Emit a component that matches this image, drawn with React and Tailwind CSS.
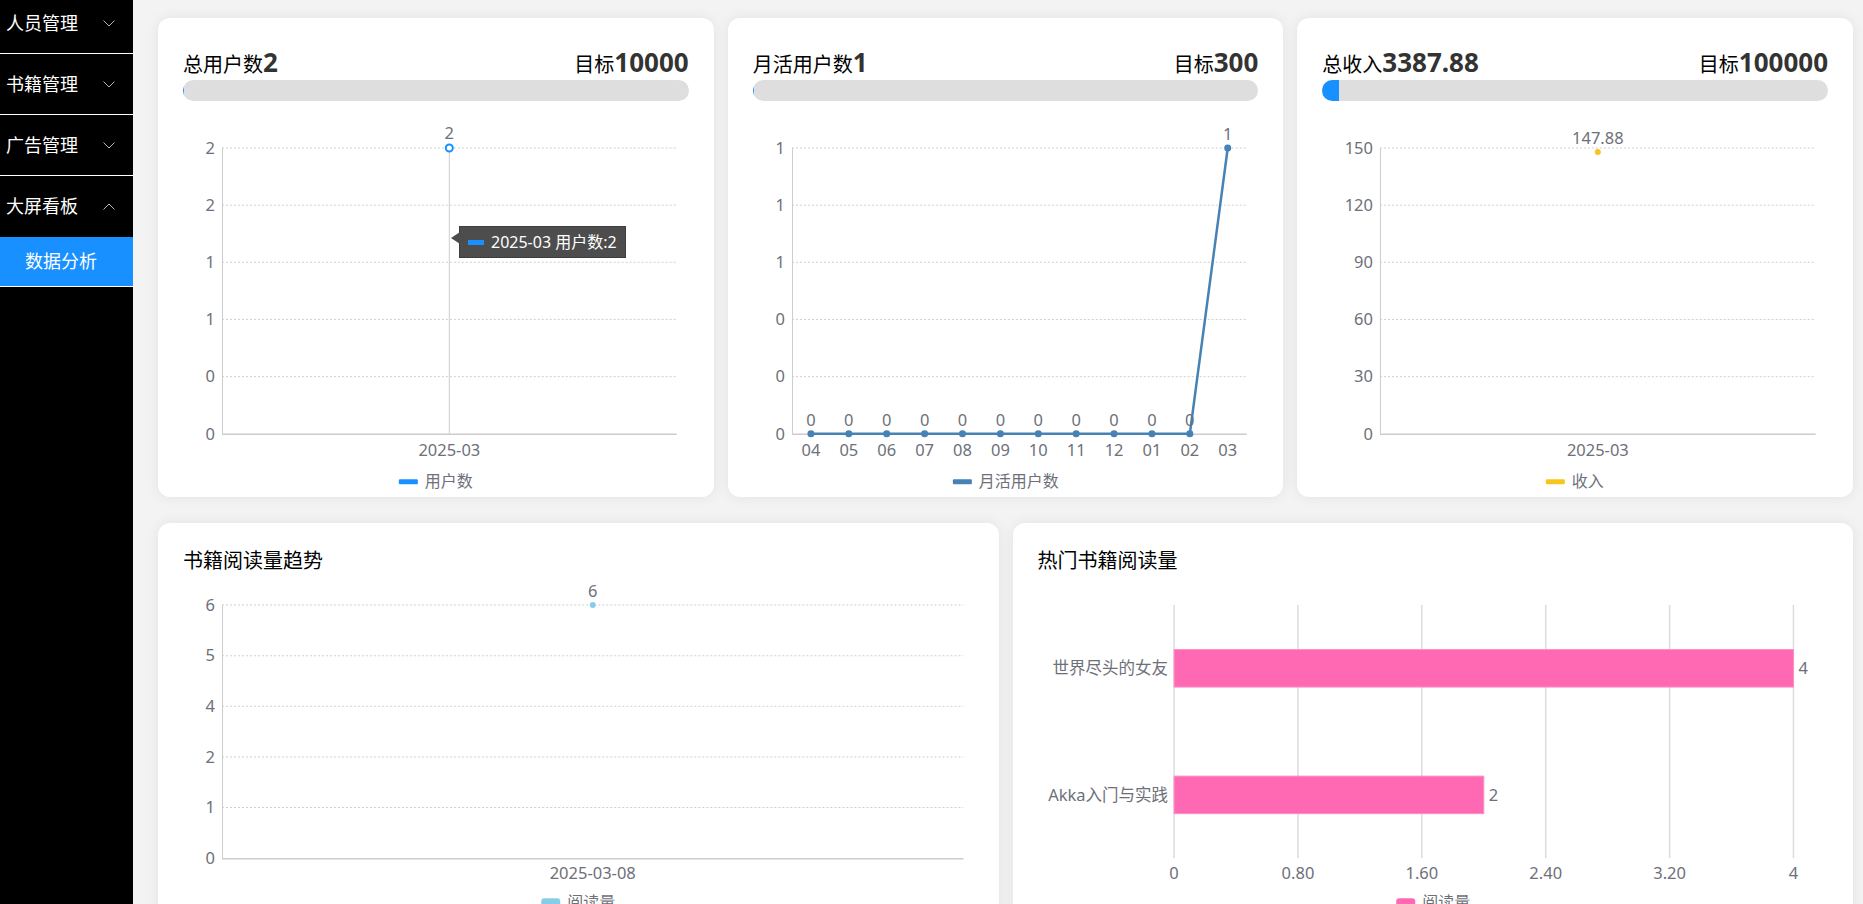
import React from 'react'

const GRID_Y = [47, 104.2, 161.4, 218.6, 275.8, 333]
const RIGHT = 494
const AXIS = '#cccccc'
const GRID = '#cfcfcf'
const LABEL = '#6e7079'

function Chevron({ up }) {
  return (
    <svg width="12" height="7" viewBox="0 0 12 7" className="shrink-0">
      <polyline
        points={up ? '0.5,6.5 6,1 11.5,6.5' : '0.5,0.5 6,6 11.5,0.5'}
        fill="none"
        stroke="#b5b5b5"
        strokeWidth="1"
      />
    </svg>
  )
}

function Sidebar() {
  const groups = [
    { name: '人员管理' },
    { name: '书籍管理' },
    { name: '广告管理' },
  ]
  return (
    <aside className="w-[133px] shrink-0 bg-black text-white text-[18px]">
      <div className="-mt-[7px]">
        {groups.map((g) => (
          <div
            key={g.name}
            className="h-[61px] flex items-center justify-between pl-[6px] pr-[18px] border-b border-white"
          >
            <span>{g.name}</span>
            <Chevron />
          </div>
        ))}
        <div className="border-b border-white">
          <div className="h-[61px] flex items-center justify-between pl-[6px] pr-[18px]">
            <span>大屏看板</span>
            <Chevron up />
          </div>
          <div className="h-[49px] flex items-center pl-[25px] bg-[#1890ff]">数据分析</div>
        </div>
      </div>
    </aside>
  )
}

function YAxis({ left, labels, grid = GRID_Y, right = RIGHT }) {
  return (
    <g>
      {grid.map((y, i) => (
        <g key={i}>
          {i < grid.length - 1 && (
            <line x1={left} x2={right} y1={y} y2={y} stroke={GRID} strokeDasharray="2 2" />
          )}
          <text x={left - 7} y={y} dy="0.35em" textAnchor="end" fontSize="16.5" fill={LABEL}>
            {labels[i]}
          </text>
        </g>
      ))}
      <line x1={left + 0.5} x2={left + 0.5} y1={grid[0]} y2={grid[grid.length - 1]} stroke={AXIS} />
      <line x1={left} x2={right} y1={grid[grid.length - 1] + 0.5} y2={grid[grid.length - 1] + 0.5} stroke={AXIS} strokeWidth="1.5" />
    </g>
  )
}

function Legend({ center, y, color, text, tall }) {
  const w = text.length * 16
  const start = center - (19 + 7 + w) / 2
  return (
    <g>
      {tall ? (
        <rect x={start} y={y - 4} width="19" height="14" rx="3" fill={color} />
      ) : (
        <rect x={start} y={y - 2.5} width="19" height="5" rx="1" fill={color} />
      )}
      <text x={start + 26} y={y} dy="0.35em" fontSize="16" fill={LABEL}>
        {text}
      </text>
    </g>
  )
}

function StatCard({ label, value, goal, percent, children }) {
  return (
    <div className="h-[479px] flex flex-col rounded-[12px] bg-white px-[25px] pt-[30px] shadow-[0_0_14px_rgba(0,0,0,0.07)]">
      <div className="flex items-baseline justify-between leading-[28px] text-black">
        <div>
          <span className="text-[20px]">{label}</span>
          <span className="text-[26px] font-bold text-[#333]">{value}</span>
        </div>
        <div>
          <span className="text-[20px]">目标</span>
          <span className="text-[26px] font-bold text-[#333]">{goal}</span>
        </div>
      </div>
      <div className="h-[25px] rounded-full bg-[#dedede] overflow-hidden">
        <div className="h-full bg-[#1890ff]" style={{ width: `${percent}%` }} />
      </div>
      <div className="relative">{children}</div>
    </div>
  )
}

function UsersChart() {
  const x = (39 + RIGHT) / 2
  return (
    <>
      <svg width="100%" viewBox="0 0 506 396" className="block">
        <YAxis left={39} labels={['2', '2', '1', '1', '0', '0']} />
        <line x1={x} x2={x} y1={47} y2={333} stroke={AXIS} />
        <circle cx={x} cy={47} r="3.5" fill="#fff" stroke="#1890ff" strokeWidth="2" />
        <text x={x} y={38} textAnchor="middle" fontSize="16.5" fill={LABEL}>2</text>
        <text x={x} y={349} dy="0.35em" textAnchor="middle" fontSize="16.5" fill={LABEL}>2025-03</text>
        <Legend center={253} y={381} color="#1890ff" text="用户数" />
      </svg>
      <div className="absolute left-[276px] top-[125px] h-[32px] flex items-center gap-[7px] pl-[8px] pr-[8px] bg-[#4d4d4d] border border-[#3d3d3d] text-white text-[16px] whitespace-nowrap">
        <span className="absolute -left-[9px] top-[5px] w-0 h-0 border-y-[6px] border-y-transparent border-r-[9px] border-r-[#4d4d4d]" />
        <span className="w-[16px] h-[5px] bg-[#1890ff]" />
        <span>2025-03 用户数:2</span>
      </div>
    </>
  )
}

function ActiveChart() {
  const months = ['04', '05', '06', '07', '08', '09', '10', '11', '12', '01', '02', '03']
  const step = (RIGHT - 39) / months.length
  const pts = months.map((m, i) => ({
    m,
    x: 39 + step * (i + 0.5),
    y: i === months.length - 1 ? 47 : 333,
    v: i === months.length - 1 ? '1' : '0',
  }))
  return (
    <svg width="100%" viewBox="0 0 506 396" className="block">
      <YAxis left={39} labels={['1', '1', '1', '0', '0', '0']} />
      <polyline
        points={pts.map((p) => `${p.x},${p.y}`).join(' ')}
        fill="none"
        stroke="#4682b4"
        strokeWidth="2.5"
      />
      {pts.map((p) => (
        <g key={p.m}>
          <circle cx={p.x} cy={p.y} r="3.5" fill="#4682b4" />
          <text x={p.x} y={p.y - 8} textAnchor="middle" fontSize="16.5" fill={LABEL}>{p.v}</text>
          <text x={p.x} y={349} dy="0.35em" textAnchor="middle" fontSize="16.5" fill={LABEL}>{p.m}</text>
        </g>
      ))}
      <Legend center={253} y={381} color="#4682b4" text="月活用户数" />
    </svg>
  )
}

function IncomeChart() {
  const x = (58 + RIGHT) / 2
  const y = 333 - (147.88 / 150) * 286
  return (
    <svg width="100%" viewBox="0 0 506 396" className="block">
      <YAxis left={58} labels={['150', '120', '90', '60', '30', '0']} />
      <circle cx={x} cy={y} r="3" fill="#f7c51e" />
      <text x={x} y={y - 8} textAnchor="middle" fontSize="16.5" fill={LABEL}>147.88</text>
      <text x={x} y={349} dy="0.35em" textAnchor="middle" fontSize="16.5" fill={LABEL}>2025-03</text>
      <Legend center={253} y={381} color="#f7c51e" text="收入" />
    </svg>
  )
}

function PanelCard({ title, children }) {
  return (
    <div className="h-[430px] flex flex-col rounded-[12px] bg-white px-[25px] pt-[24px] shadow-[0_0_14px_rgba(0,0,0,0.07)]">
      <div className="text-[20px] leading-[28px] text-black">{title}</div>
      {children}
    </div>
  )
}

const BOTTOM_GRID = [30, 80.6, 131.2, 181.8, 232.4, 283]

function TrendChart() {
  const x = (39 + 780) / 2
  return (
    <svg width="100%" viewBox="0 0 790 360" className="block">
      <YAxis left={39} right={780} grid={BOTTOM_GRID} labels={['6', '5', '4', '2', '1', '0']} />
      <circle cx={x} cy={30} r="3" fill="#87cdea" />
      <text x={x} y={22} textAnchor="middle" fontSize="16.5" fill={LABEL}>6</text>
      <text x={x} y={298} dy="0.35em" textAnchor="middle" fontSize="16.5" fill={LABEL}>2025-03-08</text>
      <Legend center={395} y={327} color="#87cdea" text="阅读量" tall />
    </svg>
  )
}

function HotBooksChart() {
  const left = 136
  const step = 123.8
  const ticks = ['0', '0.80', '1.60', '2.40', '3.20', '4']
  const bars = [
    { name: '世界尽头的女友', value: 4, cy: 93.25 },
    { name: 'Akka入门与实践', value: 2, cy: 219.75 },
  ]
  const unit = (step * 5) / 4
  return (
    <svg width="100%" viewBox="0 0 790 360" className="block">
      {ticks.map((t, i) => (
        <g key={t}>
          <line x1={left + i * step} x2={left + i * step} y1={30} y2={283} stroke="#dcdcdc" strokeWidth="1.5" />
          <text x={left + i * step} y={298} dy="0.35em" textAnchor="middle" fontSize="16.5" fill={LABEL}>{t}</text>
        </g>
      ))}
      {bars.map((b) => (
        <g key={b.name}>
          <rect x={left} y={b.cy - 18.75} width={b.value * unit} height="37.5" fill="#ff69b4" stroke="#ff8cc6" strokeWidth="1" />
          <text x={left - 6} y={b.cy} dy="0.35em" textAnchor="end" fontSize="16.5" fill={LABEL}>{b.name}</text>
          <text x={left + b.value * unit + 5} y={b.cy} dy="0.35em" fontSize="16.5" fill={LABEL}>{b.value}</text>
        </g>
      ))}
      <Legend center={395} y={327} color="#ff69b4" text="阅读量" tall />
    </svg>
  )
}

export default function App() {
  return (
    <div className="h-screen overflow-hidden flex bg-[#f3f3f3] font-['Noto_Sans','Noto_Sans_CJK_SC',sans-serif]">
      <Sidebar />
      <main className="flex-1 min-w-0 pl-[25px] pr-[10px] pt-[18px] flex flex-col gap-[26px]">
        <div className="grid grid-cols-3 gap-[14px]">
          <StatCard label="总用户数" value="2" goal="10000" percent={0.02}>
            <UsersChart />
          </StatCard>
          <StatCard label="月活用户数" value="1" goal="300" percent={0.33}>
            <ActiveChart />
          </StatCard>
          <StatCard label="总收入" value="3387.88" goal="100000" percent={3.39}>
            <IncomeChart />
          </StatCard>
        </div>
        <div className="grid grid-cols-2 gap-[14px]">
          <PanelCard title="书籍阅读量趋势">
            <TrendChart />
          </PanelCard>
          <PanelCard title="热门书籍阅读量">
            <HotBooksChart />
          </PanelCard>
        </div>
      </main>
    </div>
  )
}
